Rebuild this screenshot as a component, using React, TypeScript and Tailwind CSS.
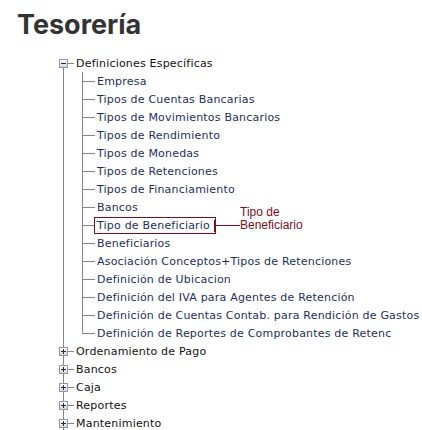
import React from "react";

const children = [
  "Empresa",
  "Tipos de Cuentas Bancarias",
  "Tipos de Movimientos Bancarios",
  "Tipos de Rendimiento",
  "Tipos de Monedas",
  "Tipos de Retenciones",
  "Tipos de Financiamiento",
  "Bancos",
  "Tipo de Beneficiario",
  "Beneficiarios",
  "Asociación Conceptos+Tipos de Retenciones",
  "Definición de Ubicacion",
  "Definición del IVA para Agentes de Retención",
  "Definición de Cuentas Contab. para Rendición de Gastos",
  "Definición de Reportes de Comprobantes de Retenc",
];

const tops = ["Ordenamiento de Pago", "Bancos", "Caja", "Reportes", "Mantenimiento"];

function Box({ open }: { open: boolean }) {
  return (
    <div className="grid h-[9px] w-[9px] shrink-0 place-items-center border border-[#8d99aa] bg-linear-to-b from-white to-[#d3d9e2]">
      <div className="col-start-1 row-start-1 h-px w-[5px] bg-[#2a2a2a]" />
      {!open && <div className="col-start-1 row-start-1 h-[5px] w-px bg-[#2a2a2a]" />}
    </div>
  );
}

function TopRow({ label, open, first }: { label: string; open: boolean; first: boolean }) {
  return (
    <div className="flex h-[18px] pl-[59px]">
      <div className="flex w-[9px] flex-col items-center">
        <div className={first ? "w-px flex-1" : "w-px flex-1 bg-[#858585]"} />
        <Box open={open} />
        <div className="w-px flex-1 bg-[#858585]" />
      </div>
      <div className="h-px w-[6px] self-center bg-[#858585]" />
      <span className="ml-[2px] pt-[1px] text-[11px] leading-[18px] tracking-[0.2px] text-[#111]">{label}</span>
    </div>
  );
}

function ChildRow({ label, last, marked }: { label: string; last: boolean; marked: boolean }) {
  return (
    <div className="relative flex h-[18px] pl-[59px]">
      <div className="flex w-[9px] justify-center">
        <div className="w-px bg-[#858585]" />
      </div>
      <div className="w-[14px]" />
      <div className="flex w-[13px] flex-col">
        <div className="h-[10px] border-b border-l border-[#858585]" />
        <div className={last ? "flex-1" : "flex-1 border-l border-[#858585]"} />
      </div>
      {marked ? (
        <>
          <span className="ml-[-1px] mt-[1px] h-[17px] w-[122px] border border-[#7a0f22] pl-[2px] text-[11px] leading-[15px] tracking-[0.2px] text-[#1b2f5c]">
            {label}
          </span>
          <div className="absolute left-[214px] top-0 flex h-[18px] items-end">
            <div className="mb-[2px] h-[12px] w-px bg-[#7a0f22]" />
            <div className="mb-[8px] h-px w-[25px] bg-[#7a0f22]" />
          </div>
          <div className="absolute left-[240px] top-[-10px] text-[12px] leading-[13px] text-[#7a0f22] [font-family:'Liberation_Sans',Arial,sans-serif]">
            <div>Tipo de</div>
            <div>Beneficiario</div>
          </div>
        </>
      ) : (
        <span className="ml-[2px] pt-[1px] text-[11px] leading-[18px] tracking-[0.2px] whitespace-nowrap text-[#1b2f5c]">{label}</span>
      )}
    </div>
  );
}

export default function App() {
  return (
    <div className="h-[430px] w-[422px] overflow-hidden bg-white [font-family:'DejaVu_Sans',Verdana,sans-serif]">
      <h1 className="pl-[17px] pt-[8px] text-[27px] font-bold leading-[34px] text-[#333] [font-family:Inter,sans-serif]">
        Tesorería
      </h1>
      <div className="mt-[12px]">
        <TopRow label="Definiciones Específicas" open first />
        {children.map((c, i) => (
          <ChildRow key={i} label={c} last={i === children.length - 1} marked={i === 8} />
        ))}
        {tops.map((t) => (
          <TopRow key={t} label={t} open={false} first={false} />
        ))}
      </div>
    </div>
  );
}
